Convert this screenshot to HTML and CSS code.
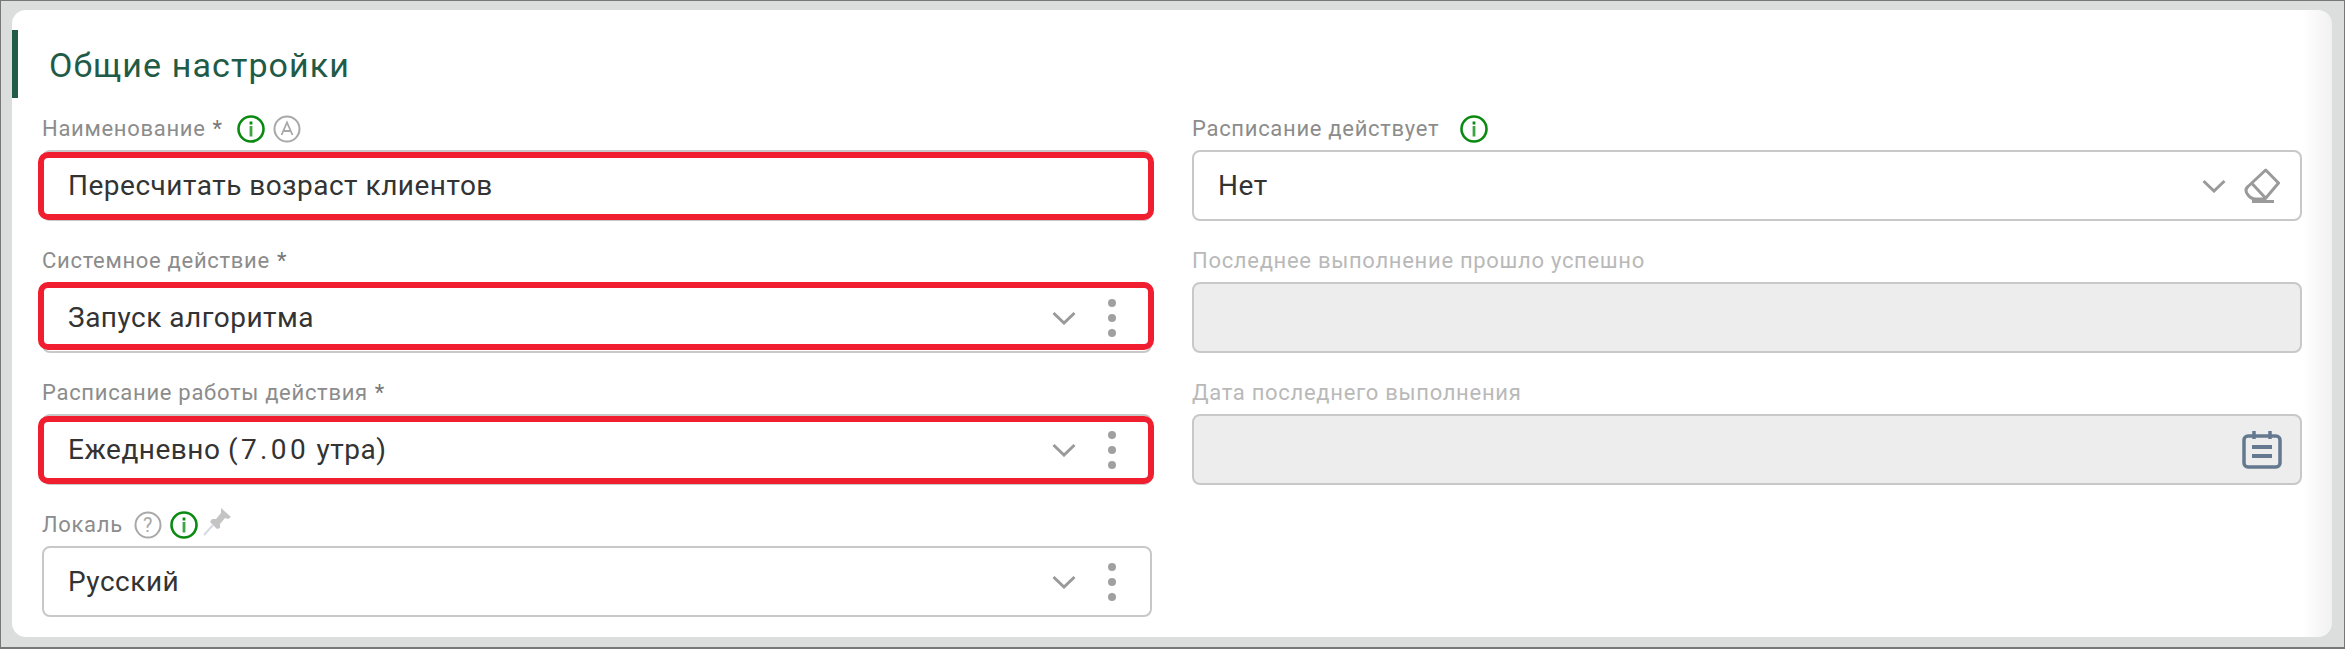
FILE: index.html
```html
<!DOCTYPE html>
<html lang="ru">

<head>
    <meta charset="UTF-8">
    <title>Общие настройки</title>
    <link rel="stylesheet" href="styles.css">
</head>

<body>
    <svg class="defs">
        <symbol id="i-info" viewBox="0 0 28 28">
            <circle cx="14" cy="14" r="12.5" fill="none" stroke="#0b8a12" stroke-width="2.6" />
            <rect x="12.6" y="6.5" width="2.8" height="3" fill="#0b8a12" />
            <rect x="12.6" y="11" width="2.8" height="10.5" fill="#3fa544" />
        </symbol>
        <symbol id="i-chevron" viewBox="0 0 24 14">
            <path d="M1.5 2 L12 12 L22.500 2" fill="none" stroke="#9a9a9a" stroke-width="3" />
        </symbol>
        <symbol id="i-dots" viewBox="0 0 8 38">
            <circle cx="4" cy="4" r="4" fill="#a0a0a0" />
            <circle cx="4" cy="19" r="4" fill="#a0a0a0" />
            <circle cx="4" cy="34" r="4" fill="#a0a0a0" />
        </symbol>
    </svg>

    <div class="frame">
        <div class="card">
            <h2 class="section-title">Общие настройки</h2>

            <div class="form-grid">
                <div class="field">
                    <div class="field-label">
                        <span>Наименование</span><span class="req">*</span>
                        <span class="icons">
                            <svg class="ico"><use href="#i-info" /></svg>
                            <svg class="ico" viewBox="0 0 28 28">
                                <circle cx="14" cy="14" r="12.500" fill="none" stroke="#a8a8a8" stroke-width="2" />
                                <path d="M8.500 20 L14 7.500 L19.500 20 M10.500 16 H17.500" fill="none" stroke="#a8a8a8" stroke-width="1.800" />
                            </svg>
                        </span>
                    </div>
                    <div class="input marked">
                        <span class="value">Пересчитать возраст клиентов</span>
                    </div>
                </div>

                <div class="field">
                    <div class="field-label">
                        <span>Расписание действует</span>
                        <span class="icons icons-wide">
                            <svg class="ico"><use href="#i-info" /></svg>
                        </span>
                    </div>
                    <div class="input input-clear">
                        <span class="value">Нет</span>
                        <svg class="chevron chevron-near"><use href="#i-chevron" /></svg>
                        <svg class="eraser" viewBox="0 0 36 36">
                            <path d="M21.700 2 L34.500 15 L21 31 H12 Q7 31 4 27 Q0 22 4 18.500 Z M8 15.500 L21 29.500 M8 33.500 H30" fill="none" stroke="#9a9a9a" stroke-width="3" stroke-linejoin="round" />
                        </svg>
                    </div>
                </div>

                <div class="field">
                    <div class="field-label"><span>Системное действие</span><span class="req">*</span></div>
                    <div class="input marked marked-high">
                        <span class="value">Запуск алгоритма</span>
                        <svg class="chevron"><use href="#i-chevron" /></svg>
                        <svg class="dots"><use href="#i-dots" /></svg>
                    </div>
                </div>

                <div class="field">
                    <div class="field-label disabled"><span>Последнее выполнение прошло успешно</span></div>
                    <div class="input input-disabled"></div>
                </div>

                <div class="field">
                    <div class="field-label"><span>Расписание работы действия</span><span class="req">*</span></div>
                    <div class="input marked">
                        <span class="value">Ежедневно <span class="digits">(7.00</span> утра)</span>
                        <svg class="chevron"><use href="#i-chevron" /></svg>
                        <svg class="dots"><use href="#i-dots" /></svg>
                    </div>
                </div>

                <div class="field">
                    <div class="field-label disabled"><span>Дата последнего выполнения</span></div>
                    <div class="input input-disabled">
                        <svg class="calendar" viewBox="0 0 40 38">
                            <rect x="2" y="5" width="36" height="31" rx="4" fill="none" stroke="#64798f" stroke-width="3.500" />
                            <path d="M12 0 V8 M28 0 V8" stroke="#64798f" stroke-width="3.500" />
                            <path d="M10 16 H30 M10 25 H30" stroke="#64798f" stroke-width="4" />
                        </svg>
                    </div>
                </div>

                <div class="field">
                    <div class="field-label">
                        <span>Локаль</span>
                        <span class="icons icons-tight">
                            <svg class="ico" viewBox="0 0 28 28">
                                <circle cx="14" cy="14" r="12.500" fill="none" stroke="#a8a8a8" stroke-width="2" />
                                <text x="14" y="21" text-anchor="middle" class="ico-text">?</text>
                            </svg>
                            <svg class="ico"><use href="#i-info" /></svg>
                            <svg class="pin" viewBox="0 0 30 30">
                                <path d="M18 2 L28 11 L25 13 L22 12 L17 18 L17 22 L14 23 L7 16 L9 13 L13 13 L18 7 Z" fill="#c4c4c4" />
                                <path d="M10 19 L1 29" stroke="#d4dbe2" stroke-width="2" />
                            </svg>
                        </span>
                    </div>
                    <div class="input">
                        <span class="value">Русский</span>
                        <svg class="chevron"><use href="#i-chevron" /></svg>
                        <svg class="dots"><use href="#i-dots" /></svg>
                    </div>
                </div>
            </div>
        </div>
    </div>
</body>

</html>
```

FILE: styles.css
```css
* {
    margin: 0;
    padding: 0;
    box-sizing: border-box;
}

body {
    width: 2346px;
    height: 650px;
    overflow: hidden;
    background-color: #fff;
    font-family: Roboto, "Liberation Sans", sans-serif;
}

.defs {
    display: none;
}

.frame {
    height: 649px;
    width: 2345px;
    padding: 9px 12px 10px 11px;
    border: 1px solid #777;
    border-bottom-width: 2px;
    background-color: #dcdddd;
}

.card {
    height: 100%;
    padding-top: 20px;
    border-radius: 14px;
    background: linear-gradient(to right, #fff 2290px, #f1f1f1 100%);
}

.section-title {
    height: 68px;
    padding-left: 31px;
    border-left: 6px solid #1f5b47;
    font-size: 34px;
    font-weight: 400;
    line-height: 70px;
    letter-spacing: 1.1px;
    color: #1f5b47;
}

.form-grid {
    display: grid;
    grid-template-columns: 1110px 1110px;
    column-gap: 40px;
    row-gap: 20px;
    margin-top: 11px;
    padding-left: 30px;
}

.field {
    height: 112px;
}

.field-label {
    display: flex;
    align-items: center;
    height: 41px;
    padding-bottom: 2px;
    font-size: 22px;
    letter-spacing: .7px;
    color: #8c8c8c;
}

.field-label.disabled {
    color: #b9b9b9;
}

.req {
    margin-left: 7px;
    color: #777;
}

.icons {
    display: flex;
    align-items: center;
    gap: 8px;
    margin-left: 14px;
}

.icons-wide {
    margin-left: 21px;
}

.icons-tight {
    margin-left: 11px;
}

.ico {
    width: 28px;
    height: 28px;
}

.ico-text {
    font-family: Roboto, sans-serif;
    font-size: 20px;
    fill: #a8a8a8;
}

.pin {
    width: 30px;
    height: 30px;
    margin-left: -3px;
    margin-top: -8px;
}

.input {
    position: relative;
    display: flex;
    align-items: center;
    height: 71px;
    padding: 0 34px 0 24px;
    border: 2px solid #c8c8c8;
    border-radius: 8px;
    background-color: #fff;
}

.input-clear {
    padding-right: 20px;
}

.input-disabled {
    padding-right: 18px;
    background-color: #ededed;
}

/* red frame drawn over the screenshot */
.marked::after {
    content: "";
    position: absolute;
    top: 0;
    left: -6px;
    right: -4px;
    bottom: -1px;
    border: 6px solid #f01e2f;
    border-radius: 10px;
}

.marked-high::after {
    top: -2px;
    bottom: 1px;
}

.value {
    flex: 1;
    font-size: 28px;
    letter-spacing: .5px;
    color: #333;
}

.digits {
    letter-spacing: 3.4px;
}

.chevron {
    width: 24px;
    height: 14px;
    margin-right: 32px;
}

.chevron-near {
    margin-right: 18px;
}

.dots {
    width: 8px;
    height: 38px;
}

.eraser {
    width: 36px;
    height: 36px;
}

.calendar {
    width: 40px;
    height: 38px;
    margin-left: auto;
}
```
